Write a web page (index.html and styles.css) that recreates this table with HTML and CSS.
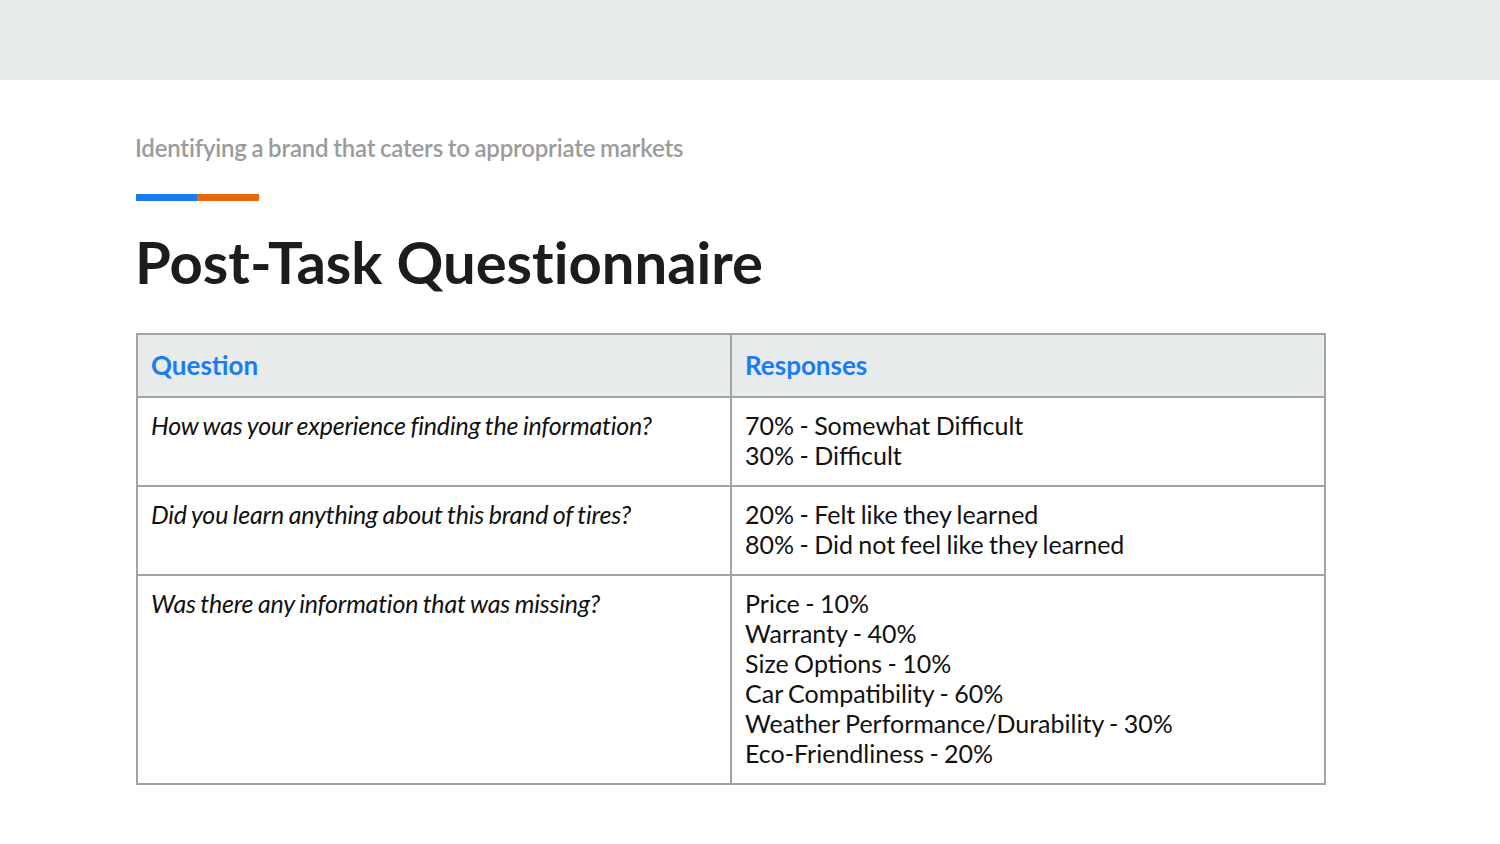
FILE: index.html
```html
<!DOCTYPE html>
<html>
<head>
<meta charset="utf-8">
<link rel="stylesheet" href="styles.css">
</head>
<body>
<div class="topbar"></div>
<main class="slide">
  <p class="subtitle">Identifying a brand that caters to appropriate markets</p>
  <div class="accent"><span class="blue"></span><span class="orange"></span></div>
  <h1 class="title">Post-Task Questionnaire</h1>
  <table class="qtable">
    <thead>
      <tr><th>Question</th><th>Responses</th></tr>
    </thead>
    <tbody>
      <tr>
        <td class="q">How was your experience finding the information?</td>
        <td>70% - Somewhat Difficult<br>30% - Difficult</td>
      </tr>
      <tr>
        <td class="q">Did you learn anything about this brand of tires?</td>
        <td>20% - Felt like they learned<br>80% - Did not feel like they learned</td>
      </tr>
      <tr>
        <td class="q">Was there any information that was missing?</td>
        <td>Price - 10%<br>Warranty - 40%<br>Size Options - 10%<br>Car Compatibility - 60%<br>Weather Performance/Durability - 30%<br>Eco-Friendliness - 20%</td>
      </tr>
    </tbody>
  </table>
</main>
</body>
</html>
```

FILE: styles.css
```css
html, body {
  margin: 0;
  padding: 0;
  background: #ffffff;
}
body {
  font-family: "Lato", "Liberation Sans", sans-serif;
  color: #111111;
  width: 1500px;
  height: 844px;
  overflow: hidden;
}
.topbar {
  height: 80px;
  background: #e8ebec;
}
.slide {
  padding: 0 0 0 135px;
}
.subtitle {
  margin: 52px 0 0 0;
  font-size: 24px;
  line-height: 32px;
  color: #9b9b9b;
  font-weight: 600;
  letter-spacing: -0.2px;
  word-spacing: -1px;
}
.accent {
  display: flex;
  margin: 30px 0 0 1px;
  height: 7px;
}
.accent .blue {
  width: 61px;
  background: #1a7cf5;
}
.accent .orange {
  width: 62px;
  background: #e8690c;
}
.title {
  margin: 26px 0 0 0;
  font-family: "Lato", sans-serif;
  font-weight: 700;
  font-size: 58px;
  line-height: 70px;
  color: #1c1c1c;
  font-variant-ligatures: none;
}
.qtable {
  margin: 36px 0 0 1px;
  border-collapse: collapse;
  width: 1190px;
  table-layout: fixed;
}
.qtable th, .qtable td {
  border: 2px solid #a3a3a3;
  text-align: left;
  vertical-align: top;
  font-size: 25px;
  line-height: 30px;
  padding: 12px 14px 15px 13px;
  word-spacing: -1px;
}
.qtable th {
  background: #e8ebec;
  color: #1a7cf5;
  font-weight: 700;
  font-size: 26px;
  padding: 15px 14px 16px 13px;
}
.qtable td.q {
  font-style: italic;
  letter-spacing: -0.2px;
}
```
